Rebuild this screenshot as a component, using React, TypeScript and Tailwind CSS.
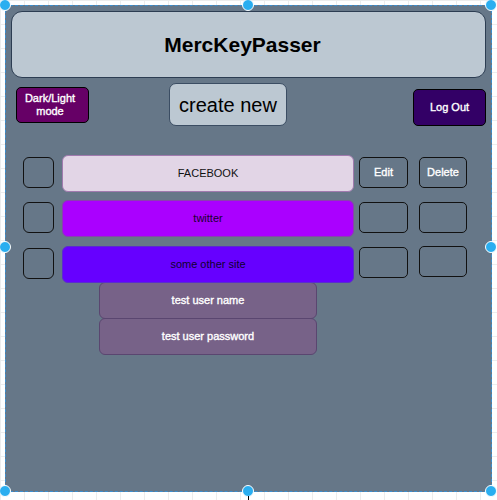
import React from "react";

const font = { fontFamily: '"Liberation Sans", Arial, sans-serif' };

function Handle({ cls }: { cls: string }) {
  return (
    <div
      className={`absolute w-[12px] h-[12px] rounded-full bg-[#2aaef0] border border-white ${cls}`}
    />
  );
}

function Row({
  label,
  bg,
  border,
  text,
  edit,
  del,
  top,
  showBtnText,
}: {
  label: string;
  bg: string;
  border: string;
  text: string;
  edit: string;
  del: string;
  top: string;
  showBtnText?: boolean;
}) {
  return (
    <div className={`flex items-start ${top}`}>
      <div className="w-[31px] h-[31px] rounded-[6px] border-[1.5px] border-[#111] mt-[2px]" />
      <div
        className={`ml-[8px] w-[292px] h-[37px] rounded-[6px] border flex items-center justify-center text-[11px] ${bg} ${border} ${text}`}
      >
        {label}
      </div>
      <div
        className={`ml-[5px] w-[49px] h-[31px] rounded-[5px] border-[1.5px] border-[#111] flex items-center justify-center text-white text-[11px] [-webkit-text-stroke:0.35px_white] ${edit}`}
      >
        {showBtnText ? "Edit" : ""}
      </div>
      <div
        className={`ml-[11px] w-[48px] h-[31px] rounded-[5px] border-[1.5px] border-[#111] flex items-center justify-center text-white text-[11px] [-webkit-text-stroke:0.35px_white] ${del}`}
      >
        {showBtnText ? "Delete" : ""}
      </div>
    </div>
  );
}

export default function App() {
  return (
    <div
      className="relative w-[497px] h-[500px] overflow-hidden bg-white bg-[linear-gradient(to_right,#ededed_1px,transparent_1px),linear-gradient(to_bottom,#ededed_1px,transparent_1px)] bg-[size:24px_24px]"
      style={font}
    >
      <div className="absolute left-[5px] top-[5px] w-[487px] h-[487px] border border-dashed border-[#3b8fd0] bg-[#667788]">
        <div className="pt-[5px] px-[5px]">
          <div className="h-[67px] pr-[12px] rounded-[11px] border border-[#2c3d52] bg-[#bcc8d2] flex items-center justify-center text-[21px] font-bold text-black">
            MercKeyPasser
          </div>
          <div className="flex items-start mt-[5px]">
            <div className="ml-[5px] mt-[4px] w-[73px] h-[36px] pr-[5px] rounded-[5px] border border-black bg-[#660066] text-white text-[11px] leading-[13px] [-webkit-text-stroke:0.35px_white] flex items-center justify-center text-center">
              Dark/Light
              <br />
              mode
            </div>
            <div className="ml-[80px] w-[118px] h-[43px] rounded-[7px] border border-[#3b4d63] bg-[#bcc8d2] text-[20px] text-black flex items-center justify-center">
              create new
            </div>
            <div className="ml-auto mt-[6px] w-[73px] h-[37px] rounded-[5px] border border-black bg-[#330066] text-white text-[11px] [-webkit-text-stroke:0.35px_white] flex items-center justify-center">
              Log Out
            </div>
          </div>
          <div className="pl-[12px] mt-[29px]">
            <Row
              label="FACEBOOK"
              bg="bg-[#e2d5e6]"
              border="border-[#a07aae]"
              text="text-[#111]"
              edit="mt-[2px]"
              del="mt-[2px]"
              top=""
              showBtnText
            />
            <Row
              label="twitter"
              bg="bg-[#aa00ff]"
              border="border-[#8a3fb0]"
              text="text-[#1a0030]"
              edit="mt-[2px]"
              del="mt-[2px]"
              top="mt-[8px]"
            />
            <Row
              label="some other site"
              bg="bg-[#6600ff]"
              border="border-[#5a2ccf]"
              text="text-[#100030]"
              edit="mt-[1px]"
              del="mt-0"
              top="mt-[9px]"
            />
            <div className="ml-[76px] -mt-[1px] w-[218px]">
              <div className="h-[37px] rounded-[6px] border border-[#5a4670] bg-[#776288] text-white text-[11px] [-webkit-text-stroke:0.35px_white] flex items-center justify-center">
                test user name
              </div>
              <div className="-mt-[1px] h-[37px] rounded-[6px] border border-[#5a4670] bg-[#776288] text-white text-[11px] [-webkit-text-stroke:0.35px_white] flex items-center justify-center">
                test user password
              </div>
            </div>
          </div>
        </div>
      </div>
      <Handle cls="left-[-1px] top-[-1px]" />
      <Handle cls="left-[242px] top-[-1px]" />
      <Handle cls="left-[485px] top-[-1px]" />
      <Handle cls="left-[-1px] top-[241px]" />
      <Handle cls="left-[485px] top-[241px]" />
      <Handle cls="left-[-1px] top-[485px]" />
      <Handle cls="left-[242px] top-[485px]" />
      <Handle cls="left-[485px] top-[485px]" />
      <div className="absolute left-[248px] top-[496px] w-[1px] h-[4px] bg-black" />
    </div>
  );
}
